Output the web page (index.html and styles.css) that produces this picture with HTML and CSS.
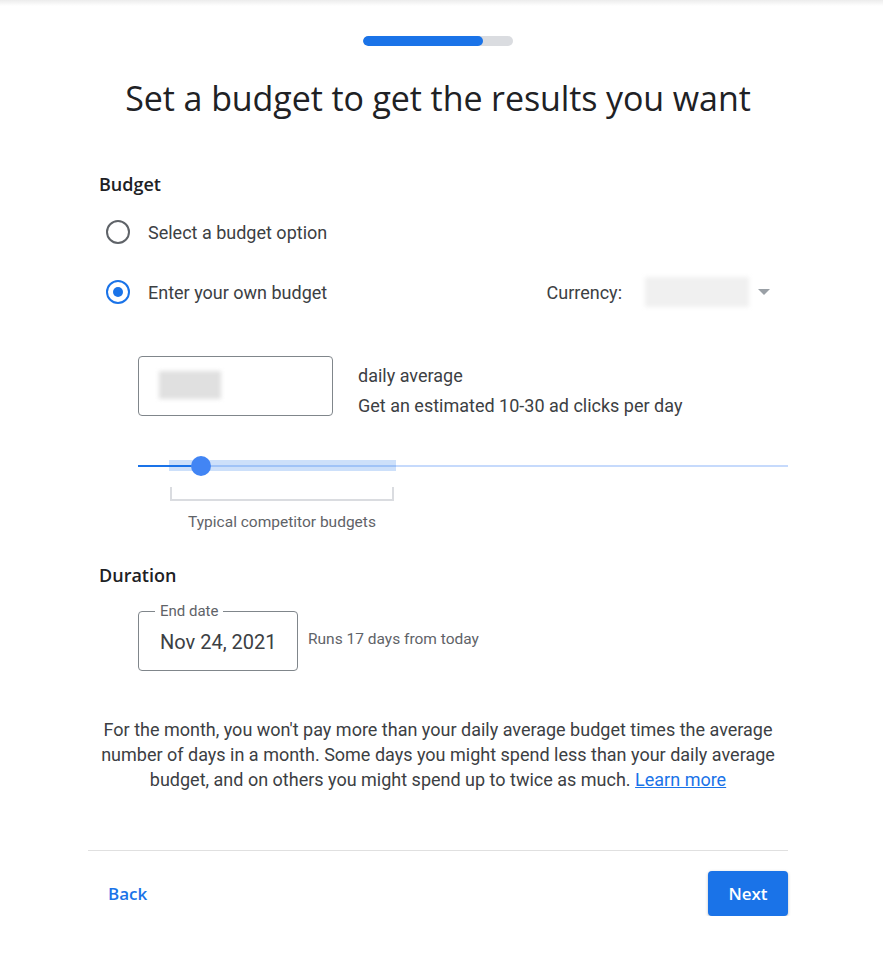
FILE: index.html
```html
<!DOCTYPE html>
<html lang="en">
<head>
    <meta charset="UTF-8">
    <title>Set a budget</title>
    <link rel="stylesheet" href="styles.css">
</head>
<body>

<div class="topbar"></div>

<div class="page">
    <div class="progress"><div class="progress-fill"></div></div>

    <h1 class="title">Set a budget to get the results you want</h1>

    <section class="section">
        <h2 class="section-title">Budget</h2>

        <label class="radio-row">
            <span class="radio"></span>
            <span class="radio-label">Select a budget option</span>
        </label>

        <div class="radio-row own">
            <label class="radio-main">
                <span class="radio checked"></span>
                <span class="radio-label">Enter your own budget</span>
            </label>
            <div class="currency">
                <span class="currency-label">Currency:</span>
                <span class="blur-box currency-value"></span>
                <span class="caret"></span>
            </div>
        </div>

        <div class="amount-row">
            <div class="amount-field">
                <span class="blur-box amount-value"></span>
            </div>
            <div class="amount-info">
                <div>daily average</div>
                <div>Get an estimated 10-30 ad clicks per day</div>
            </div>
        </div>

        <div class="slider">
            <div class="slider-track"></div>
            <div class="slider-fill"></div>
            <div class="slider-range"></div>
            <div class="slider-thumb"></div>
        </div>
        <div class="bracket"></div>
        <div class="bracket-label">Typical competitor budgets</div>
    </section>

    <section class="section duration">
        <h2 class="section-title">Duration</h2>
        <div class="date-row">
            <div class="date-field">
                <span class="date-legend">End date</span>
                <span class="date-value">Nov 24, 2021</span>
            </div>
            <span class="date-note">Runs 17 days from today</span>
        </div>
    </section>

    <p class="note">For the month, you won't pay more than your daily average budget times the average number of days in a month. Some days you might spend less than your daily average budget, and on others you might spend up to twice as much. <a href="#">Learn more</a></p>

    <footer class="actions">
        <a class="back" href="#">Back</a>
        <button class="next">Next</button>
    </footer>
</div>

</body>
</html>
```

FILE: styles.css
```css
body {
    margin: 0;
    font-family: Roboto, "Liberation Sans", sans-serif;
    background-color: #ffffff;
    color: #3c4043;
}

.topbar {
    height: 6px;
    background: linear-gradient(#ececec, #ffffff);
}

.page {
    width: 700px;
    margin-left: 88px;
}

.progress {
    width: 150px;
    height: 10px;
    margin: 30px auto 0;
    border-radius: 5px;
    background-color: #dadce0;
    overflow: hidden;
}

.progress-fill {
    width: 120px;
    height: 100%;
    border-radius: 5px;
    background-color: #1a73e8;
}

.title {
    margin: 30px 0 0;
    font-family: "Open Sans", sans-serif;
    font-weight: 400;
    font-size: 34px;
    line-height: 44px;
    text-align: center;
    color: #202124;
    letter-spacing: -0.1px;
}

.section {
    margin-top: 52px;
}

.section-title {
    margin: 0 0 0 11px;
    font-family: "Open Sans", sans-serif;
    font-weight: 600;
    font-size: 18px;
    line-height: 24px;
    color: #202124;
}

.radio-row {
    display: flex;
    align-items: center;
    height: 40px;
    margin-top: 16px;
    padding-left: 18px;
}

.radio-row.own {
    margin-top: 20px;
    justify-content: space-between;
}

.radio-main {
    display: flex;
    align-items: center;
}

.radio {
    box-sizing: border-box;
    width: 24px;
    height: 24px;
    border: 2px solid #5f6368;
    border-radius: 50%;
    display: flex;
    align-items: center;
    justify-content: center;
}

.radio.checked {
    border-color: #1a73e8;
}

.radio.checked::after {
    content: "";
    width: 10px;
    height: 10px;
    border-radius: 50%;
    background-color: #1a73e8;
}

.radio-label {
    margin-left: 18px;
    font-size: 18px;
}

.currency {
    display: flex;
    align-items: center;
    margin-right: 18px;
}

.currency-label {
    font-size: 18px;
    margin-right: 23px;
}

.blur-box {
    display: block;
    background-color: #ececec;
    filter: blur(2px);
}

.currency-value {
    width: 104px;
    height: 30px;
    background-color: #f0f0f0;
}

.caret {
    width: 0;
    height: 0;
    margin-left: 9px;
    border-left: 6px solid transparent;
    border-right: 6px solid transparent;
    border-top: 6px solid #9aa0a6;
}

.amount-row {
    display: flex;
    align-items: flex-start;
    margin-top: 44px;
    padding-left: 50px;
}

.amount-field {
    box-sizing: border-box;
    width: 195px;
    height: 60px;
    border: 1px solid #80868b;
    border-radius: 4px;
    padding: 14px 0 0 20px;
}

.amount-value {
    width: 62px;
    height: 28px;
    background-color: #e0e0e0;
}

.amount-info {
    margin-left: 25px;
    padding-top: 5px;
    font-size: 18px;
    line-height: 30px;
}

.slider {
    position: relative;
    height: 22px;
    margin: 34px 0 0 50px;
}

.slider-track {
    position: absolute;
    left: 0;
    right: 0;
    top: 10px;
    height: 2px;
    background-color: #c6dafc;
}

.slider-range {
    position: absolute;
    left: 31px;
    top: 5px;
    width: 227px;
    height: 11px;
    background-color: rgba(26, 115, 232, 0.22);
}

.slider-fill {
    position: absolute;
    left: 0;
    top: 10px;
    width: 63px;
    height: 2px;
    background-color: #1a73e8;
}

.slider-thumb {
    position: absolute;
    left: 53px;
    top: 1px;
    width: 20px;
    height: 20px;
    border-radius: 50%;
    background-color: #4285f4;
}

.bracket {
    box-sizing: border-box;
    width: 224px;
    height: 14px;
    margin: 10px 0 0 82px;
    border: 2px solid #dadce0;
    border-top: none;
}

.bracket-label {
    width: 224px;
    margin: 12px 0 0 82px;
    text-align: center;
    font-size: 15.5px;
    color: #5f6368;
}

.duration {
    margin-top: 32px;
}

.date-row {
    display: flex;
    align-items: center;
    margin-top: 24px;
    padding-left: 50px;
}

.date-field {
    position: relative;
    box-sizing: border-box;
    width: 160px;
    height: 60px;
    border: 1px solid #80868b;
    border-radius: 4px;
    display: flex;
    align-items: center;
    padding-left: 21px;
}

.date-legend {
    position: absolute;
    left: 16px;
    top: -10px;
    padding: 0 5px;
    background-color: #ffffff;
    font-size: 15px;
    line-height: 18px;
    color: #5f6368;
}

.date-value {
    font-size: 20px;
    padding-top: 2px;
}

.date-note {
    margin-left: 10px;
    margin-top: -5px;
    font-size: 15.5px;
    color: #5f6368;
}

.note {
    margin: 46px 0 0;
    text-align: center;
    font-size: 18px;
    line-height: 25px;
}

.note a {
    color: #1a73e8;
    text-decoration: underline;
}

.actions {
    display: flex;
    justify-content: space-between;
    align-items: center;
    margin-top: 58px;
    padding-top: 20px;
    border-top: 1px solid #e0e0e0;
}

.back {
    margin-left: 20px;
    font-family: "Open Sans", sans-serif;
    font-weight: 600;
    font-size: 17px;
    color: #1a73e8;
    text-decoration: none;
}

.next {
    width: 80px;
    height: 45px;
    border: none;
    border-radius: 4px;
    background-color: #1a73e8;
    color: #ffffff;
    font-family: "Open Sans", sans-serif;
    font-weight: 600;
    font-size: 17px;
    box-shadow: 0 1px 3px rgba(60, 64, 67, 0.35);
    cursor: pointer;
}
```
